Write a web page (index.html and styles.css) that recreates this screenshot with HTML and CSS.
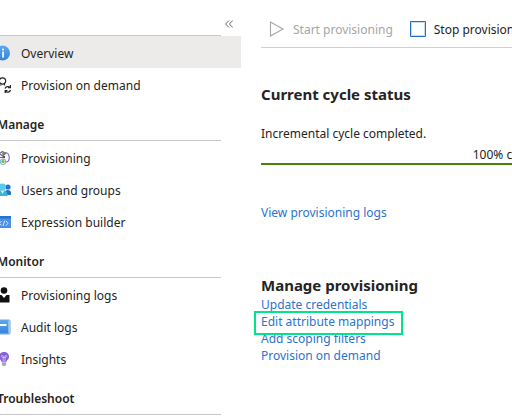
FILE: index.html
```html
<!DOCTYPE html>
<html lang="en">
  <head>
    <meta charset="utf-8">
    <title>Provisioning - Overview</title>
    <link rel="stylesheet" href="styles.css">
  </head>
  <body>
    <div class="layout">
      <nav class="sidebar">
        <div class="sidebar-top">
          <button class="collapse" type="button" aria-label="Collapse menu">
            <svg width="8" height="8" viewBox="0 0 8 8"><path d="M4 0.5L0.7 4L4 7.5M7.7 0.5L4.4 4L7.7 7.5" fill="none" stroke="#555" stroke-width="0.9"/></svg>
          </button>
        </div>
        <ul class="menu">
          <li><a class="active" href="#">
            <svg class="icon" viewBox="0 0 16 16"><defs><linearGradient id="blue" x1="0" y1="0" x2="0" y2="1"><stop offset="0" stop-color="#5ea9ee"/><stop offset="1" stop-color="#3584d8"/></linearGradient></defs><circle cx="8" cy="8" r="7.5" fill="url(#blue)"/><circle cx="8.5" cy="4.5" r="1" fill="#fff"/><path d="M7.7 6.5h1.7v6H7.7z" fill="#fff"/></svg>
            Overview</a></li>
          <li><a href="#">
            <svg class="icon" viewBox="0 0 16 16"><g fill="none" stroke="#222" stroke-width="1.2"><circle cx="8" cy="4" r="3.2"/><path d="M10 6.500v2M4 8h3"/><path d="M10.500 11.500a3 3 0 0 1 5-1M16 8v2.700h-2.500M16 13a3 3 0 0 1-5 1.300M10.700 16v-2.500H13"/></g></svg>
            Provision on demand</a></li>
        </ul>
        <h2 class="menu-title">Manage</h2>
        <ul class="menu">
          <li><a href="#">
            <svg class="icon" viewBox="0 0 16 16"><g fill="none" stroke-width="1.1"><path d="M10 2.500C13.500 2.500 14.700 5 14.700 7.500S13.500 12 11.500 12" stroke="#9160b8"/><path d="M5 3.500L8 1.500L11 3.500L8 6z" stroke="#7a5ba8"/><path d="M5 7.500h5" stroke="#7a5ba8"/><circle cx="8.500" cy="11.800" r="2.700" stroke="#7eb5dc"/></g><circle cx="9" cy="3.500" r="1.500" fill="#5f9e25"/><circle cx="8.500" cy="11.500" r="1.500" fill="#6fb52c"/><circle cx="9.500" cy="7" r="1.200" fill="#555"/></svg>
            Provisioning</a></li>
          <li><a href="#">
            <svg class="icon" viewBox="0 0 16 16"><circle cx="13.500" cy="5" r="2.600" fill="#2474cf"/><path d="M9 13c0-3 2-5 4.500-5S17 10 17 13z" fill="#2474cf"/><circle cx="8" cy="5" r="3.600" fill="#5bcbea"/><path d="M2 14c0-4 2-6 5.500-6S13 10 13 14z" fill="#3bb3d9"/><path d="M6 8.500h4L8 12z" fill="#c9f1fa"/></svg>
            Users and groups</a></li>
          <li><a href="#">
            <svg class="icon" viewBox="0 0 16 16"><path d="M0 2h17v12H0z" fill="#4b91e7"/><path d="M0 2h17v2.500H0z" fill="#2473ce"/><path d="M7 7L5 9.300L7 11.500M11.500 7l2 2.300l-2 2.200M10.200 6.500L8.500 12" fill="none" stroke="#d7e8fd"/></svg>
            Expression builder</a></li>
        </ul>
        <h2 class="menu-title">Monitor</h2>
        <ul class="menu">
          <li><a href="#">
            <svg class="icon" viewBox="0 0 16 16"><circle cx="9.500" cy="3.500" r="3.300" fill="#111"/><path d="M3 8h4l2.500 3L12 8h3v7.500H3z" fill="#111"/></svg>
            Provisioning logs</a></li>
          <li><a href="#">
            <svg class="icon" viewBox="0 0 16 16"><rect x="2" y="1" width="13.500" height="14" rx="1" fill="#d4e6f8" stroke="#6fa2d9"/><path d="M1 1h13v13.500H1z" fill="url(#blue)"/><path d="M4 5h8v2H4z" fill="#fff"/></svg>
            Audit logs</a></li>
          <li><a href="#">
            <svg class="icon" viewBox="0 0 16 16"><path d="M9.500 1C6.500 1 4.500 3 4.500 5.700C4.500 8.500 7 9 7.300 11.500h4.400C12 9 14.500 8.500 14.500 5.700C14.500 3 12.500 1 9.500 1z" fill="#8661d8"/><path d="M8.700 11V6.500M10.500 11V6.500M8.700 6.500c-2.500 0-2-2.500-.7-2s.7 2 .7 2h1.800s-.5-1.500.7-2s1.800 2-.7 2" fill="none" stroke="#d9c8fa" stroke-width=".8"/><path d="M7.300 12h4.400v1.500L10.700 15H8.300l-1-1.500z" fill="#aaa"/></svg>
            Insights</a></li>
        </ul>
        <h2 class="menu-title">Troubleshoot</h2>
      </nav>

      <main class="content">
        <div class="toolbar">
          <button class="command" type="button" disabled>
            <svg width="16" height="16" viewBox="0 0 16 16"><path d="M1.500 1L14 8L1.500 15z" fill="none" stroke="#a6a6a6" stroke-width="1.100"/></svg>
            Start provisioning
          </button>
          <button class="command" type="button">
            <svg width="16" height="16" viewBox="0 0 16 16"><path d="M.5.5h15v15H.5z" fill="#fff" stroke="#1f6fc9"/><path d="M1.500 1.500h13v13h-13z" fill="none" stroke="#c3daf3"/></svg>
            Stop provisioning
          </button>
        </div>
        <section class="status">
          <h1>Current cycle status</h1>
          <p>Incremental cycle completed.</p>
          <div class="progress">100% complete</div>
          <a class="logs-link" href="#">View provisioning logs</a>
        </section>
        <section class="manage">
          <h1>Manage provisioning</h1>
          <ul class="links">
            <li><a href="#">Update credentials</a></li>
            <li><a class="highlight" href="#">Edit attribute mappings</a></li>
            <li><a href="#">Add scoping filters</a></li>
            <li><a href="#">Provision on demand</a></li>
          </ul>
        </section>
      </main>
    </div>
  </body>
</html>
```
FILE: styles.css
```css
body {
  margin: 0;
  overflow: hidden;
  background-color: #fff;
  color: #252423;
  font-family: "Noto Sans", sans-serif;
  font-size: 12px;
  line-height: 17px;
}
h1, h2, p, ul {
  margin: 0;
  padding: 0;
}
ul {
  list-style: none;
}
a {
  color: #2b74cc;
  text-decoration: none;
}
button {
  padding: 0;
  border: none;
  background: none;
  color: inherit;
  font: inherit;
}
.layout {
  display: flex;
  gap: 20px;
}
/* the menu is scrolled a little past the left edge */
.sidebar {
  flex: 0 0 247px;
  margin-left: -6px;
}
.sidebar-top {
  display: flex;
  justify-content: flex-end;
  height: 35px;
  margin-right: 20px;
  border-bottom: 1px solid #c8c8c8;
}
.collapse {
  display: flex;
  margin: 20px -12px 0 0;
}
.menu a {
  display: flex;
  align-items: center;
  gap: 10px;
  box-sizing: border-box;
  height: 32px;
  padding-top: 2px;
  color: #252423;
}
.menu a.active {
  background-color: #edebe9;
}
.icon {
  flex: none;
  width: 17px;
  height: 16px;
}
.menu-title {
  margin-right: 20px;
  padding: 16px 0 7px 3px;
  border-bottom: 1px solid #c8c8c8;
  font-size: 12px;
  font-weight: 600;
}
.content {
  flex: 1;
  min-width: 0;
}
.toolbar {
  display: flex;
  gap: 17px;
  padding: 21px 0 9px 8px;
  border-bottom: 1px solid #d2d0ce;
}
.command {
  display: flex;
  gap: 8px;
  white-space: nowrap;
}
.command:disabled {
  color: #a6a6a6;
}
h1 {
  font-size: 15px;
  font-weight: 700;
  line-height: 20px;
}
.status {
  padding-top: 36px;
}
.status p {
  margin-top: 21px;
}
.progress {
  width: 298px;
  margin-top: 4px;
  border-bottom: 2px solid #498205;
  text-align: right;
}
.logs-link {
  display: block;
  margin-top: 39px;
}
.manage {
  padding-top: 54px;
}
.links {
  padding-top: 1px;
}
.highlight {
  position: relative;
}
.highlight::after {
  content: "";
  position: absolute;
  inset: -2px -9px -5px -7px;
  border: 2px solid #00e58b;
}
```
